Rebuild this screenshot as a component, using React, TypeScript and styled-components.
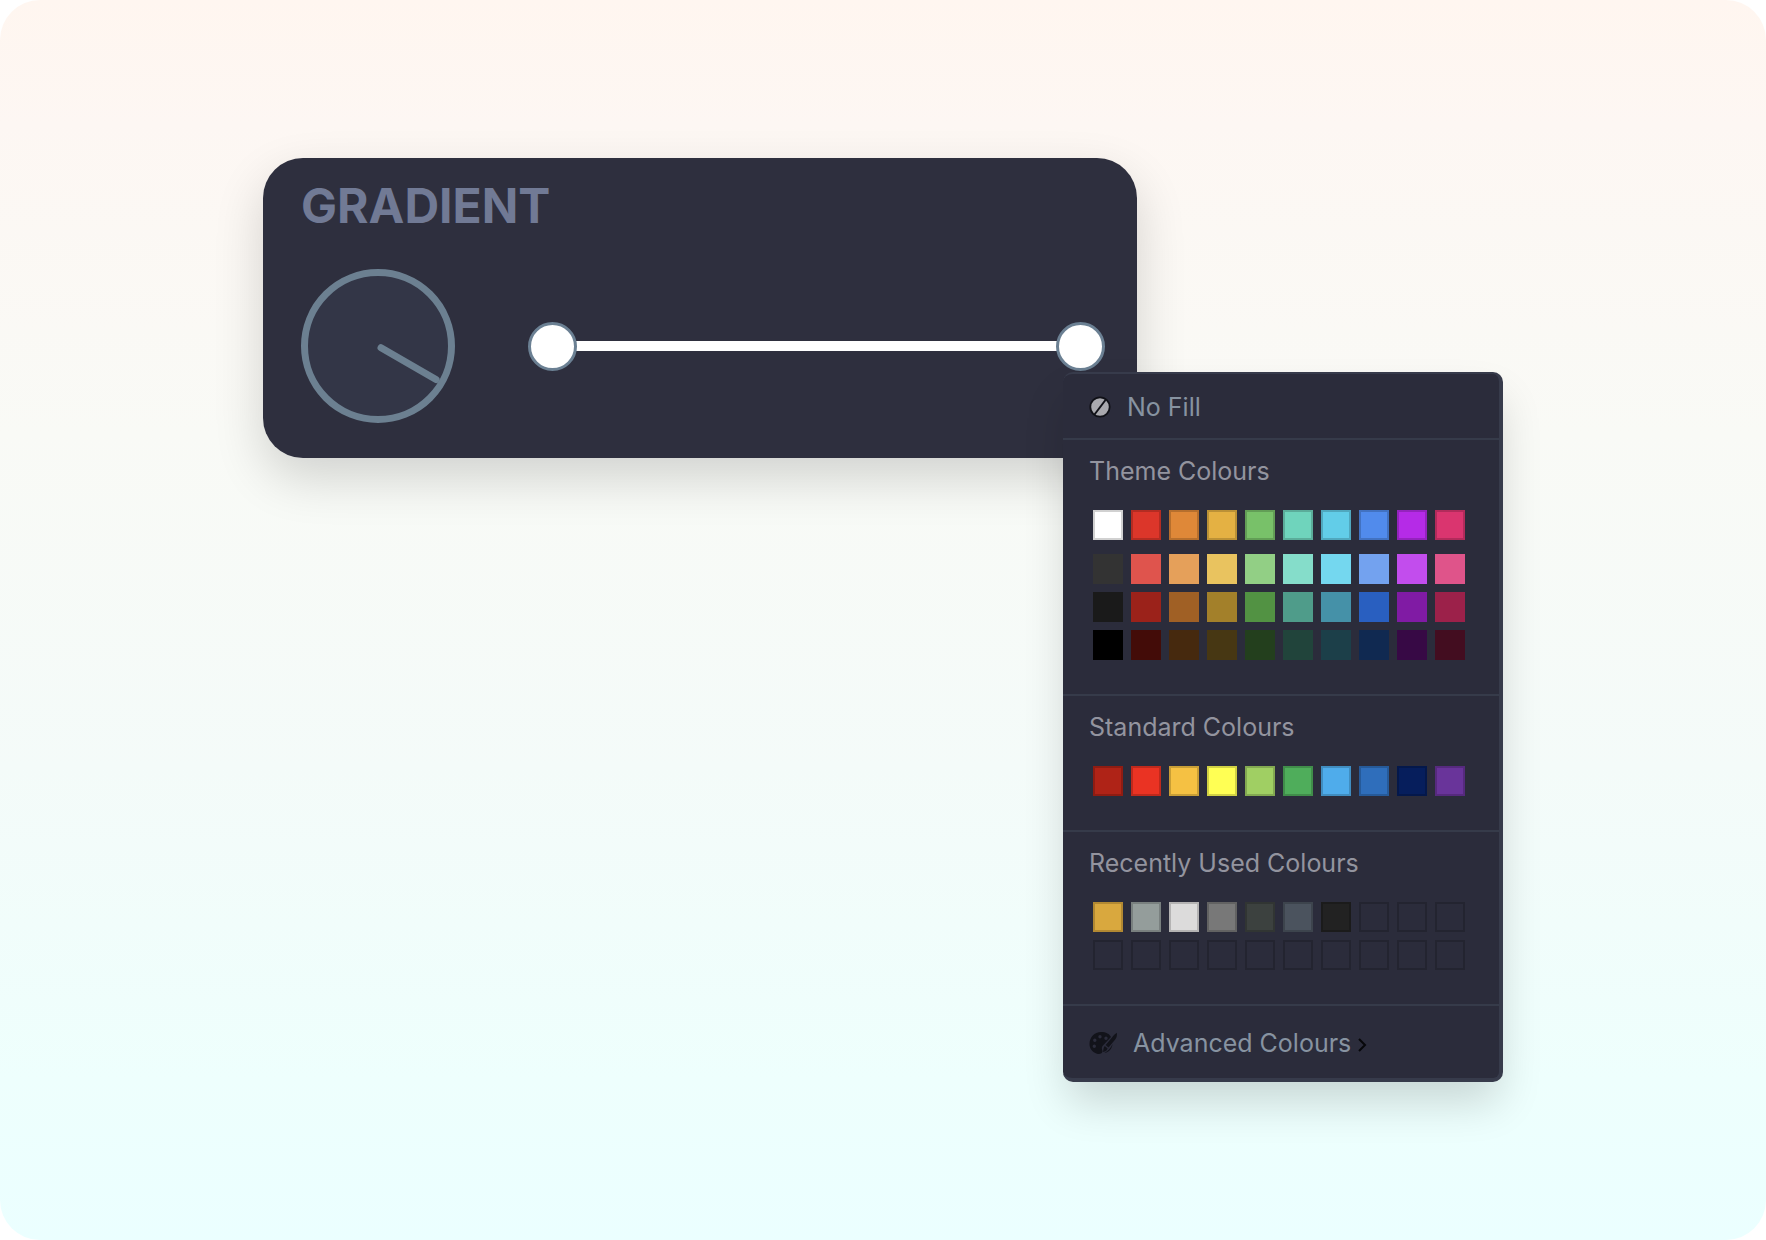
import React, { useState } from "react";
import styled, { createGlobalStyle } from "styled-components";

const GlobalStyle = createGlobalStyle`
  *, *::before, *::after { box-sizing: border-box; }
  body { margin: 0; background: #ffffff; font-family: Inter, "Liberation Sans", sans-serif; }
`;

const Stage = styled.main`
  display: flex;
  justify-content: center;
  align-items: center;
  min-height: 100vh;
  padding: 24px;
  border-radius: 40px;
  background: linear-gradient(180deg, #fff6f0 0%, #fdf7f3 10%, #f9faf6 35%, #f4fbf9 62%, #eefffd 87%, #ebffff 100%);
`;

const Workspace = styled.div`
  display: flex;
  align-items: flex-start;
  width: 100%;
  max-width: 1240px;
`;

const Card = styled.section`
  flex: 1;
  min-width: 0;
  height: 300px;
  padding: 18px 32px 0 38px;
  border-radius: 40px;
  background: #2e2f3e;
  box-shadow: 0 20px 50px rgba(0, 0, 0, 0.16);
`;

const Title = styled.h1`
  margin: 0 0 33px;
  font-size: 48px;
  line-height: 60px;
  font-weight: 700;
  color: #717a95;
`;

const Controls = styled.div`
  display: flex;
  align-items: center;
  gap: 73px;
`;

const DialLabel = styled.label`
  display: grid;
  flex: none;
  width: 154px;
  height: 154px;
  cursor: pointer;

  > * { grid-area: 1 / 1; }
`;

const DialInput = styled.input`
  width: 154px;
  height: 154px;
  margin: 0;
  opacity: 0;
`;

const Stops = styled.div`
  display: grid;
  flex: 1;
  align-items: center;
  height: 50px;

  > * { grid-area: 1 / 1; }
`;

const Track = styled.div`
  height: 10px;
  margin: 0 24px;
  background: #ffffff;
`;

const StopInput = styled.input`
  appearance: none;
  width: 100%;
  height: 50px;
  margin: 0;
  background: transparent;
  pointer-events: none;

  &::-webkit-slider-thumb {
    appearance: none;
    width: 49px;
    height: 49px;
    border: 3px solid #6b8093;
    border-radius: 50%;
    background: #ffffff;
    pointer-events: auto;
    cursor: pointer;
  }
`;

const Panel = styled.aside`
  position: relative;
  flex: none;
  width: 440px;
  margin: 214px 0 0 -74px;
  border: solid #373b4b;
  border-width: 2px 4px 4px 0;
  border-radius: 10px;
  background: #2b2c3b;
  box-shadow: 0 24px 44px -4px rgba(0, 0, 0, 0.16);
`;

const MenuButton = styled.button<{ $height: number; $divided?: boolean }>`
  display: flex;
  align-items: center;
  gap: 16px;
  width: 100%;
  height: ${(p) => p.$height}px;
  padding: 2px 26px 0;
  border: 0;
  border-bottom: ${(p) => (p.$divided ? "2px solid #363b4a" : "0")};
  background: none;
  font: inherit;
  font-size: 25px;
  line-height: 30px;
  color: #8793a1;
  cursor: pointer;
`;

const MenuText = styled.span`
  display: flex;
  align-items: baseline;
  gap: 6px;
`;

const Section = styled.section`
  padding: 16px 26px 34px;
  border-bottom: 2px solid #363b4a;
`;

const SectionTitle = styled.h2`
  margin: 0 0 24px;
  font-size: 25px;
  line-height: 30px;
  font-weight: 400;
  color: #93949f;
`;

const Swatches = styled.div<{ $spaced?: boolean }>`
  display: grid;
  grid-template-columns: repeat(10, 30px);
  gap: 8px;
  padding-left: 4px;
  margin-bottom: ${(p) => (p.$spaced ? "14px" : "0")};
`;

const Swatch = styled.button<{ $color: string; $edge: string }>`
  width: 30px;
  height: 30px;
  padding: 0;
  border: 2px solid ${(p) => p.$edge};
  background: ${(p) => p.$color};
  cursor: pointer;
`;

const EDGE = "rgba(0, 0, 0, 0.18)";

const themeBase = ["#ffffff", "#dc362a", "#df8838", "#e4b143", "#78c169", "#6fd4bc", "#62cde8", "#518bec", "#b52be7", "#da356f"];
const themeShades = [
  "#333333", "#df544d", "#e5a05a", "#e9c35f", "#92cf85", "#85ddca", "#74d7ef", "#73a2ef", "#c24ded", "#df548a",
  "#1a1a1a", "#9b221a", "#a06025", "#a3802a", "#529243", "#4f9c8a", "#4591a8", "#295fc0", "#801ba4", "#9c214a",
  "#000000", "#430c08", "#46290e", "#473713", "#233f1d", "#21443b", "#1c3f49", "#102951", "#370945", "#430d20",
];
const standard = ["#af2317", "#ea3323", "#f5c143", "#ffff54", "#a0cf63", "#4fad5b", "#4faceb", "#2f6ebb", "#061e5c", "#69349a"];
const recent = ["#d9a83e", "#949d9b", "#dcdbdb", "#787878", "#3c413f", "#4b535e", "#222222", ...Array(13).fill("transparent")];

function Palette({ colors, edge, spaced }: { colors: string[]; edge: string; spaced?: boolean }) {
  return (
    <Swatches $spaced={spaced}>
      {colors.map((color, i) => (
        <Swatch
          key={i}
          type="button"
          $color={color}
          $edge={edge}
          aria-label={color === "transparent" ? "Empty" : color}
        />
      ))}
    </Swatches>
  );
}

function AngleDial() {
  const [angle, setAngle] = useState(30);
  return (
    <DialLabel>
      <svg width="154" height="154" viewBox="0 0 154 154" aria-hidden="true">
        <circle cx="77" cy="77" r="73.5" fill="#333647" stroke="#6c8091" strokeWidth="7" />
        <path d="M80.5 77H144" transform={`rotate(${angle} 77 77)`} stroke="#6c8091" strokeWidth="7" strokeLinecap="round" />
      </svg>
      <DialInput
        type="range"
        min={0}
        max={360}
        value={angle}
        aria-label="Angle"
        onChange={(e) => setAngle(Number(e.target.value))}
      />
    </DialLabel>
  );
}

function NoFillIcon() {
  return (
    <svg width="22" height="22" viewBox="0 0 22 22" aria-hidden="true">
      <circle cx="11" cy="11" r="9.7" fill="#a9a9ae" stroke="#101117" strokeWidth="1.8" />
      <path d="M5.5 18.5L16.5 4" stroke="#101117" strokeWidth="2" />
    </svg>
  );
}

function PaletteIcon() {
  return (
    <svg width="28" height="24" viewBox="0 0 28 24" fill="#12131a" aria-hidden="true">
      <path
        fillRule="evenodd"
        d="M12 1C17 1 20.600 3 22 6L13.500 15C12 17 13.500 19 13.500 20.500C13.300 22.500 11 23.300 8 22.700C3.500 21.500 0.500 17.500 0.500 13C0.500 6.500 5.500 1 12 1ZM11 4A1.700 1.700 0 1 0 11 7.400A1.700 1.700 0 1 0 11 4ZM17 5.500A1.700 1.700 0 1 0 17 8.900A1.700 1.700 0 1 0 17 5.500ZM5.800 7.600A1.700 1.700 0 1 0 5.800 11A1.700 1.700 0 1 0 5.800 7.600ZM5.300 13.600A1.700 1.700 0 1 0 5.300 17A1.700 1.700 0 1 0 5.300 13.600Z"
      />
      <path d="M27.800 1.800C28.300 4.500 27.500 7 25.800 9L19.500 16.500L16.700 14L23 6.500C24.500 4.500 26 3 27.800 1.800Z" />
      <path d="M15.800 15L18.600 17.500C18 19.500 16.500 20.700 13.800 21C14.700 19.500 14 17 15.800 15Z" />
      <path d="M23.500 13C22 17 19 20 15.500 22C19.500 21.500 23 18 23.500 13Z" />
    </svg>
  );
}

function Chevron() {
  return (
    <svg width="10" height="14" viewBox="0 0 10 14" fill="none" stroke="#07070a" strokeWidth="2" aria-hidden="true">
      <path d="M2 1L8 7L2 13" />
    </svg>
  );
}

export default function App() {
  const [start, setStart] = useState(0);
  const [end, setEnd] = useState(100);

  return (
    <>
      <GlobalStyle />
      <Stage>
        <Workspace>
          <Card>
            <Title>GRADIENT</Title>
            <Controls>
              <AngleDial />
              <Stops>
                <Track />
                <StopInput type="range" aria-label="Start stop" value={start} onChange={(e) => setStart(Number(e.target.value))} />
                <StopInput type="range" aria-label="End stop" value={end} onChange={(e) => setEnd(Number(e.target.value))} />
              </Stops>
            </Controls>
          </Card>

          <Panel>
            <MenuButton type="button" $height={66} $divided>
              <NoFillIcon />
              No Fill
            </MenuButton>
            <Section>
              <SectionTitle>Theme Colours</SectionTitle>
              <Palette colors={themeBase} edge={EDGE} spaced />
              <Palette colors={themeShades} edge="transparent" />
            </Section>
            <Section>
              <SectionTitle>Standard Colours</SectionTitle>
              <Palette colors={standard} edge={EDGE} />
            </Section>
            <Section>
              <SectionTitle>Recently Used Colours</SectionTitle>
              <Palette colors={recent} edge={EDGE} />
            </Section>
            <MenuButton type="button" $height={72}>
              <PaletteIcon />
              <MenuText>
                Advanced Colours
                <Chevron />
              </MenuText>
            </MenuButton>
          </Panel>
        </Workspace>
      </Stage>
    </>
  );
}
